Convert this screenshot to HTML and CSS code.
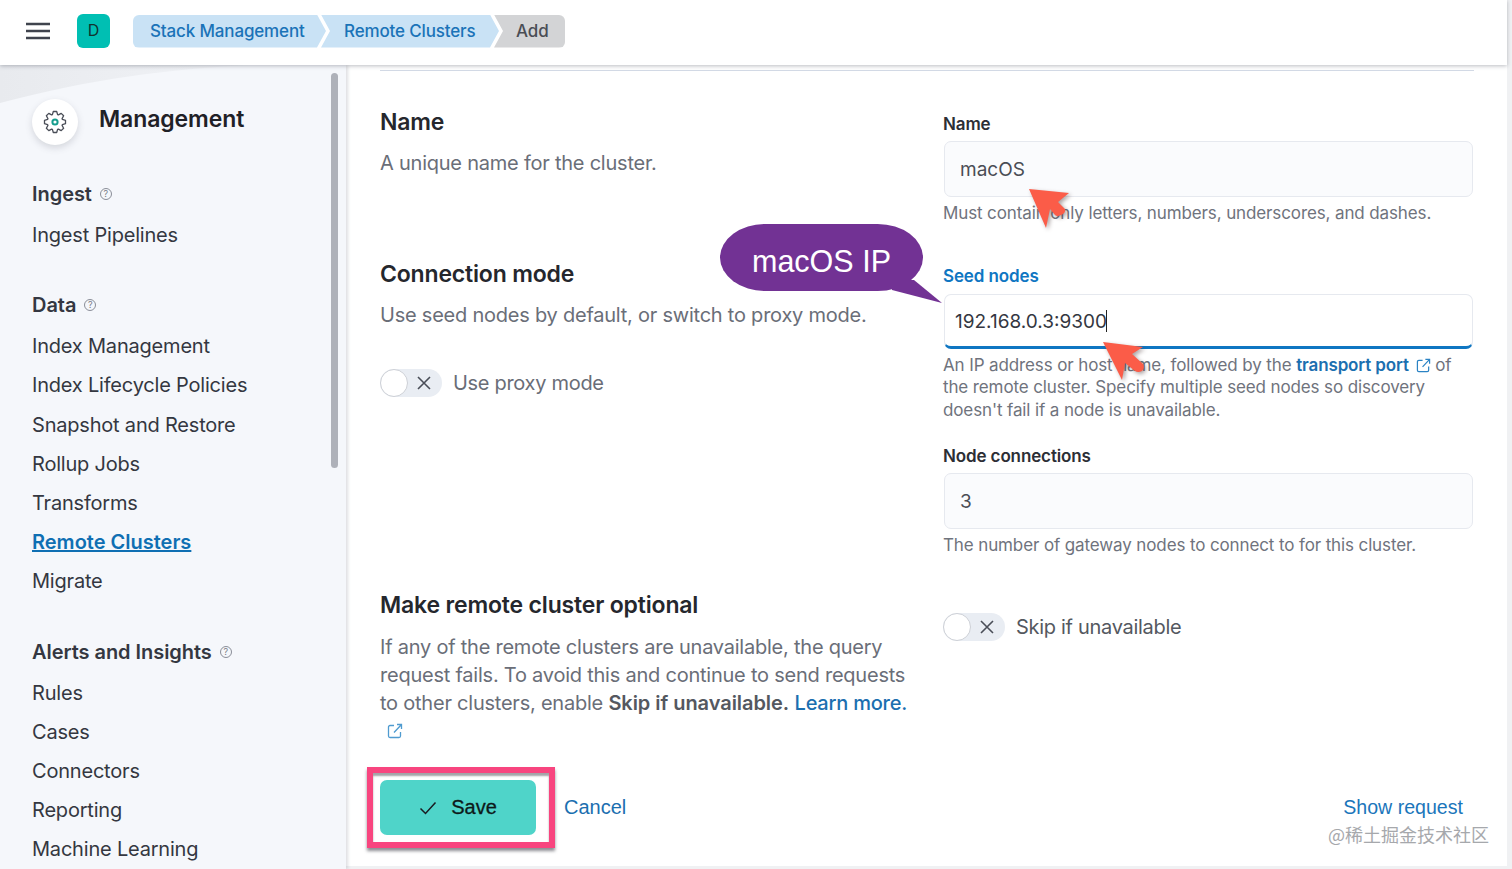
FILE: index.html
```html
<!DOCTYPE html>
<html lang="en">
<head>
<meta charset="utf-8">
<title>Remote Clusters</title>
<link rel="stylesheet" href="styles.css">
</head>
<body>
<header class="topbar">
  <svg class="menu" width="24" height="18" viewBox="0 0 24 18"><path d="M0 2h24M0 9h24M0 16h24" stroke="#3f434d" stroke-width="2.6" fill="none"/></svg>
  <div class="avatar">D</div>
  <nav class="crumbs">
    <a class="crumb first">Stack Management</a>
    <a class="crumb middle">Remote Clusters</a>
    <span class="crumb last">Add</span>
  </nav>
</header>
<div class="layout">
  <aside class="sidebar">
    <svg class="swoosh" width="346" height="60" viewBox="0 0 346 60"><defs><linearGradient id="sw" x1="0" y1="0" x2="1" y2="0"><stop offset="0" stop-color="#e8eaee"/><stop offset="1" stop-color="#f1f3f7"/></linearGradient></defs><path d="M0 0H250C170 4 90 14 0 38Z" fill="url(#sw)"/></svg>
    <div class="thumb"></div>
    <div class="brand">
      <div class="gear">
        <svg width="24" height="24" viewBox="0 0 24 24" fill="none">
          <polygon points="9.4,4.6 10.3,1.5 13.7,1.5 14.6,4.6 15.39,4.93 18.22,3.37 20.63,5.78 19.07,8.61 19.4,9.4 22.5,10.3 22.5,13.7 19.4,14.6 19.07,15.39 20.63,18.22 18.22,20.63 15.39,19.07 14.6,19.4 13.7,22.5 10.3,22.5 9.4,19.4 8.61,19.07 5.78,20.63 3.37,18.22 4.93,15.39 4.6,14.6 1.5,13.7 1.5,10.3 4.6,9.4 4.93,8.61 3.37,5.78 5.78,3.37 8.61,4.93" stroke="#4a4e58" stroke-width="1.3" stroke-linejoin="round"/>
          <circle cx="12" cy="12" r="2.6" stroke="#159d8e" stroke-width="2"/>
        </svg>
      </div>
      <h1 class="brand-title">Management</h1>
    </div>
    <section class="group">
      <h2 class="group-title">Ingest <span class="q">?</span></h2>
      <a class="item">Ingest Pipelines</a>
    </section>
    <section class="group">
      <h2 class="group-title">Data <span class="q">?</span></h2>
      <a class="item">Index Management</a>
      <a class="item">Index Lifecycle Policies</a>
      <a class="item">Snapshot and Restore</a>
      <a class="item">Rollup Jobs</a>
      <a class="item">Transforms</a>
      <a class="item active">Remote Clusters</a>
      <a class="item">Migrate</a>
    </section>
    <section class="group">
      <h2 class="group-title">Alerts and Insights <span class="q">?</span></h2>
      <a class="item">Rules</a>
      <a class="item">Cases</a>
      <a class="item">Connectors</a>
      <a class="item">Reporting</a>
      <a class="item">Machine Learning</a>
    </section>
  </aside>
  <main class="main">
    <div class="rule"></div>
    <section class="row row-name">
      <div class="intro">
        <h3>Name</h3>
        <p>A unique name for the cluster.</p>
      </div>
      <div class="fields">
        <label class="label">Name</label>
        <div class="input">macOS</div>
        <p class="help">Must contain only letters, numbers, underscores, and dashes.</p>
      </div>
    </section>
    <section class="row row-conn">
      <div class="intro">
        <h3>Connection mode</h3>
        <p>Use seed nodes by default, or switch to proxy mode.</p>
        <div class="switch-row">
          <span class="switch"><i class="knob"></i><svg width="14" height="14" viewBox="0 0 14 14"><path d="M1 1l12 12M13 1L1 13" stroke="#4a4e58" stroke-width="1.6" fill="none"/></svg></span>
          <span class="switch-text">Use proxy mode</span>
        </div>
      </div>
      <div class="fields">
        <label class="label focus">Seed nodes</label>
        <div class="input seed"><span>192.168.0.3:9300</span><i class="caret"></i></div>
        <p class="help">An IP address or host name, followed by the <a class="help-link">transport port</a> <svg class="ext small" width="15" height="15" viewBox="0 0 16 16" fill="none"><path d="M7 2.500H3A1.500 1.500 0 0 0 1.500 4v9A1.500 1.500 0 0 0 3 14.500h9a1.500 1.500 0 0 0 1.500-1.500V9M7 9.500 14.500 1.500M10 1.500h4.500V6" stroke="#2b83c4" stroke-width="1.300"/></svg> of the remote cluster. Specify multiple seed nodes so discovery doesn't fail if a node is unavailable.</p>
        <label class="label second">Node connections</label>
        <div class="input">3</div>
        <p class="help">The number of gateway nodes to connect to for this cluster.</p>
      </div>
    </section>
    <section class="row row-skip">
      <div class="intro">
        <h3>Make remote cluster optional</h3>
        <p>If any of the remote clusters are unavailable, the query request fails. To avoid this and continue to send requests to other clusters, enable <b>Skip if unavailable.</b> <a class="learn">Learn more.</a> <svg class="ext" width="16" height="16" viewBox="0 0 16 16" fill="none"><path d="M7 2.500H3A1.500 1.500 0 0 0 1.500 4v9A1.500 1.500 0 0 0 3 14.500h9a1.500 1.500 0 0 0 1.500-1.500V9M7 9.500 14.500 1.500M10 1.500h4.500V6" stroke="#4f9bd0" stroke-width="1.300"/></svg></p>
      </div>
      <div class="fields">
        <div class="switch-row skip">
          <span class="switch"><i class="knob"></i><svg width="14" height="14" viewBox="0 0 14 14"><path d="M1 1l12 12M13 1L1 13" stroke="#4a4e58" stroke-width="1.600" fill="none"/></svg></span>
          <span class="switch-text">Skip if unavailable</span>
        </div>
      </div>
    </section>
    <footer class="actions">
      <div class="save-wrap">
        <button class="save"><svg width="18" height="14" viewBox="0 0 18 14"><path d="M1.500 7.500l5 5L16.500 1.500" stroke="#1a1c21" stroke-width="1.500" fill="none"/></svg>Save</button>
        <div class="highlight"></div>
      </div>
      <a class="cancel">Cancel</a>
      <a class="show">Show request</a>
    </footer>
  </main>
</div>

<div class="bubble">macOS IP</div>
<svg class="bubble-tail" width="52" height="26" viewBox="0 0 52 26"><path d="M0 10V0H22L50 23Z" fill="#723294"/></svg>
<svg class="arrow arrow-one" width="60" height="55" viewBox="0 0 60 55"><path d="M9 9 49 13 38 22 45 29Q46 33 41 35 37 37 35 35L30 29 26 48Z" fill="#fb5c48"/></svg>
<svg class="arrow arrow-two" width="60" height="55" viewBox="0 0 60 55"><path d="M8 7 48 12 37 19 48 29Q50 33 47 36 43 38 40 36L30 28 27 45Z" fill="#fb5c48"/></svg>
<div class="watermark">@稀土掘金技术社区</div>
</body>
</html>
```
FILE: styles.css
```css
* { box-sizing: border-box; }
html, body { margin: 0; height: 869px; overflow: hidden; }
body { font-family: Inter, "Liberation Sans", sans-serif; color: #343741; background: #f0f1f3; position: relative; }
h1, h2, h3, p { margin: 0; }

.topbar { position: relative; z-index: 2; height: 65px; width: 1507px; background: #fff; display: flex; align-items: center; padding: 0 0 3px 26px; box-shadow: 0 1px 4px rgba(60,66,80,.35); }
.avatar { width: 33px; height: 34px; margin-left: 27px; border-radius: 6px; background: #00bfb3; color: #11332f; font-size: 16px; display: flex; align-items: center; justify-content: center; padding-bottom: 3px; }
.crumbs { display: flex; margin-left: 23px; height: 33px; font-size: 17px; font-weight: 500; letter-spacing: -.15px; white-space: nowrap; }
.crumb { display: flex; align-items: center; color: #1a73b8; background: #c9e2f5; }
.first { width: 193px; padding-left: 17px; border-radius: 6px 0 0 6px; clip-path: polygon(0 0, 184px 0, 100% 50%, 184px 100%, 0 100%); }
.middle { width: 178px; margin-left: -5px; padding-left: 23px; clip-path: polygon(0 0, 169px 0, 100% 50%, 169px 100%, 0 100%, 9px 50%); }
.last { width: 71px; margin-left: -5px; padding-left: 22px; color: #4a4d55; background: #d3d4d6; border-radius: 0 6px 6px 0; clip-path: polygon(0 0, 100% 0, 100% 100%, 0 100%, 9px 50%); }

.layout { display: flex; width: 1507px; height: 801px; }
.sidebar { position: relative; flex: 0 0 346px; height: 804px; padding: 34px 0 0 32px; background: #f5f7fb; overflow: hidden; box-shadow: 2px 0 3px rgba(90,96,110,.2); z-index: 1; }
.swoosh { position: absolute; left: 0; top: 0; }
.thumb { position: absolute; left: 331px; top: 8px; width: 7px; height: 395px; border-radius: 4px; background: #aeb1b9; }
.brand { position: relative; display: flex; align-items: flex-start; height: 82px; }
.gear { width: 46px; height: 46px; border-radius: 50%; background: #fff; box-shadow: 0 3px 7px rgba(80,86,100,.2); display: flex; align-items: center; justify-content: center; }
.brand-title { margin: 5px 0 0 21px; font-size: 23px; font-weight: 600; line-height: 30px; color: #1f2127; letter-spacing: -.1px; }
.group { position: relative; margin-bottom: 37px; }
.group-title { font-size: 20px; line-height: 26px; font-weight: 600; color: #343741; display: flex; align-items: center; letter-spacing: -.05px; }
.q { width: 12px; height: 12px; margin-left: 8px; border: 1px solid #8a8e98; border-radius: 50%; font-size: 9px; font-weight: 400; color: #7a7e88; display: flex; align-items: center; justify-content: center; letter-spacing: 0; }
.item { display: block; font-size: 20px; line-height: 39.2px; color: #343741; letter-spacing: -.2px; }
.group-title + .item { margin-top: 9px; }
.active { color: #0f6fb3; font-weight: 600; text-decoration: underline; letter-spacing: 0; }

.main { flex: 1; position: relative; background: #fff; padding: 5px 33px 0 34px; color: #6a6e78; }
.rule { height: 1px; background: #d3dae6; margin-bottom: 36px; }
.row { display: grid; grid-template-columns: 563px 531px; }
.row-name { height: 152px; }
.row-conn { height: 331px; }
.row-skip { height: 190px; }
.fields { margin-top: -2px; }
.intro h3 { font-size: 23px; line-height: 30px; font-weight: 600; color: #25272d; letter-spacing: -.17px; }
.intro p { margin-top: 12px; width: 530px; font-size: 20px; line-height: 28px; color: #6a6e78; letter-spacing: -.23px; }
.row-skip .intro p { margin-top: 13px; }
.intro b { font-weight: 600; color: #545860; letter-spacing: -.05px; }
.learn { color: #1b6fb0; font-weight: 500; }
.ext { margin-left: 7px; vertical-align: -1px; }
.ext.small { margin-left: 2px; vertical-align: -2px; }
.switch-row { display: flex; align-items: center; gap: 11px; margin-top: 40px; font-size: 20px; line-height: 28px; color: #696d77; }
.switch-text { letter-spacing: -.3px; }
.switch-row.skip { margin-top: 25px; color: #545860; }
.switch { position: relative; width: 62px; height: 28px; border-radius: 14px; background: #e9edf3; display: flex; align-items: center; justify-content: flex-end; padding-right: 11px; }
.knob { position: absolute; left: 0; top: 0; width: 28px; height: 28px; border-radius: 50%; background: #fff; border: 1.500px solid #cdd0d6; }

.label { display: block; font-size: 17px; line-height: 22px; font-weight: 600; color: #2c2e35; padding-top: 7.5px; height: 29px; letter-spacing: -.12px; }
.label.focus { color: #0f76c2; }
.label.second { margin-top: 16px; }
.input { margin: 7px 0 0 1px; height: 56px; width: 529px; padding: 0 15px; border: 1px solid #e6e9ef; border-radius: 7px; background: #fafbfd; display: flex; align-items: center; font-size: 19px; color: #4a4d55; }
.seed { margin-top: 8px; height: 55px; padding: 1px 0 0 10px; background: #fff; color: #343741; border-bottom: 3px solid #0f76c2; }
.caret { width: 1.500px; height: 22px; background: #222; margin-left: -1px; }
.help { margin-top: 5px; width: 530px; font-size: 17px; line-height: 22.4px; color: #6f737d; letter-spacing: -.12px; }
.help-link { color: #1b6fb0; font-weight: 600; }

.actions { display: flex; align-items: center; height: 55px; font-family: "Liberation Sans", Arial, sans-serif; }
.save-wrap { position: relative; }
.save { width: 156px; height: 55px; border: 0; border-radius: 7px; background: #4fd4c9; color: #0d1a1a; font: 20px "Liberation Sans", Arial, sans-serif; -webkit-text-stroke: .3px #0d1a1a; display: flex; align-items: center; justify-content: center; gap: 14px; }
.highlight { position: absolute; left: -13px; top: -13px; width: 188px; height: 81px; border: 6px solid #f8457f; box-shadow: 0 3px 3px rgba(50,50,60,.55), inset 0 3px 2px rgba(50,50,60,.45); }
.cancel { margin-left: 28px; font-size: 20px; color: #1b6fb0; }
.show { margin-left: auto; margin-right: 11px; font-size: 19.6px; color: #1b76bb; }

.bubble { position: absolute; left: 720px; top: 224px; width: 203px; height: 67px; padding-top: 8px; border-radius: 46px / 34px; background: #723294; color: #fff; font: 30.5px "Liberation Sans", Arial, sans-serif; display: flex; align-items: center; justify-content: center; z-index: 3; }
.bubble-tail { position: absolute; left: 892px; top: 280px; z-index: 3; }
.arrow { position: absolute; z-index: 4; filter: drop-shadow(2px 2px 2px rgba(70,50,50,.45)); }
.arrow-one { left: 1020px; top: 180px; }
.arrow-two { left: 1095px; top: 335px; }
.watermark { position: absolute; left: 1328px; top: 822px; font: 18px "Noto Sans CJK SC", "Liberation Sans", sans-serif; line-height: 24px; color: #a6a8ac; z-index: 4; }
```
